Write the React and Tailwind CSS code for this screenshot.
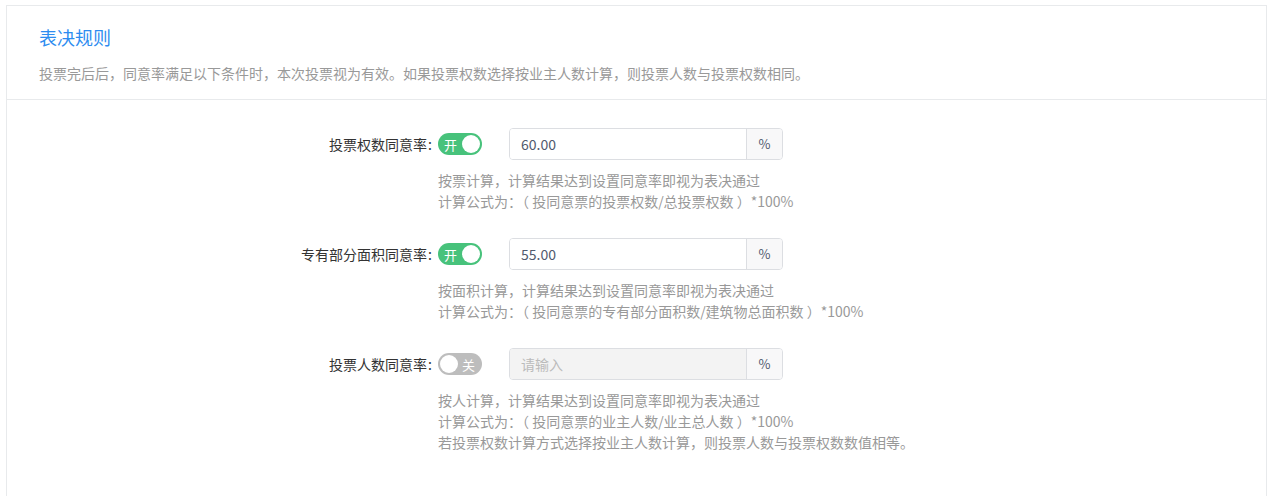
import React, { useState } from 'react';

const rules = [
  {
    key: 'weight',
    label: '投票权数同意率',
    on: true,
    value: '60.00',
    help: ['按票计算，计算结果达到设置同意率即视为表决通过', '计算公式为：（ 投同意票的投票权数/总投票权数 ）*100%'],
  },
  {
    key: 'area',
    label: '专有部分面积同意率',
    on: true,
    value: '55.00',
    help: ['按面积计算，计算结果达到设置同意率即视为表决通过', '计算公式为：（ 投同意票的专有部分面积数/建筑物总面积数 ）*100%'],
  },
  {
    key: 'people',
    label: '投票人数同意率',
    on: false,
    value: '',
    help: [
      '按人计算，计算结果达到设置同意率即视为表决通过',
      '计算公式为：（ 投同意票的业主人数/业主总人数 ）*100%',
      '若投票权数计算方式选择按业主人数计算，则投票人数与投票权数数值相等。',
    ],
  },
];

const Switch = ({ on, onToggle }) => (
  <button
    type="button"
    onClick={onToggle}
    className={`relative flex h-[22px] w-[44px] shrink-0 items-center rounded-full text-[13px] text-white ${
      on ? 'bg-[#47c27b]' : 'bg-[#bdbdbd]'
    }`}
  >
    {on ? (
      <>
        <span className="pl-[6px] leading-none">开</span>
        <span className="absolute right-[2px] top-[2px] h-[18px] w-[18px] rounded-full bg-white" />
      </>
    ) : (
      <>
        <span className="absolute left-[2px] top-[2px] h-[18px] w-[18px] rounded-full bg-white" />
        <span className="ml-auto pr-[7px] leading-none">关</span>
      </>
    )}
  </button>
);

const RuleRow = ({ rule }) => {
  const [on, setOn] = useState(rule.on);
  return (
    <div className="mb-[26px]">
      <div className="flex items-center">
        <div className="w-[425px] text-right text-[14px] text-[#333]">
          {rule.label}
          <span className="ml-[1px]">:</span>
        </div>
        <div className="ml-[6px]">
          <Switch on={on} onToggle={() => setOn(!on)} />
        </div>
        <div className="ml-[27px] flex h-[32px] w-[274px] overflow-hidden rounded-[4px] border border-[#dcdee2]">
          <input
            defaultValue={rule.value}
            placeholder="请输入"
            disabled={!on}
            className={`min-w-0 flex-1 px-[11px] text-[14px] text-[#515a6e] outline-none placeholder:text-[#bbb] ${
              on ? 'bg-white' : 'bg-[#f3f3f3]'
            }`}
          />
          <div className="flex w-[36px] items-center justify-center border-l border-[#dcdee2] bg-[#f8f8f9] text-[13px] text-[#515a6e]">
            %
          </div>
        </div>
      </div>
      <div className="ml-[431px] mt-[10px] text-[14px] leading-[21px] text-[#999]">
        {rule.help.map((line) => (
          <div key={line}>{line}</div>
        ))}
      </div>
    </div>
  );
};

export default function App() {
  return (
    <div
      className="h-[496px] overflow-hidden bg-white pl-[6px] pr-[1px] pt-[5px]"
      style={{ fontFamily: '"Noto Sans CJK SC", "Noto Sans", sans-serif' }}
    >
      <div className="h-[600px] border border-[#e8eaec] bg-white">
        <div className="border-b border-[#e8eaec] px-[32px] pb-[15px] pt-[18px]">
          <h2 className="text-[18px] leading-[26px] text-[#2d8cf0]">表决规则</h2>
          <p className="mt-[12px] text-[14px] leading-[22px] text-[#999]">
            投票完后后，同意率满足以下条件时，本次投票视为有效。如果投票权数选择按业主人数计算，则投票人数与投票权数相同。
          </p>
        </div>
        <div className="pt-[28px]">
          {rules.map((rule) => (
            <RuleRow key={rule.key} rule={rule} />
          ))}
        </div>
      </div>
    </div>
  );
}
